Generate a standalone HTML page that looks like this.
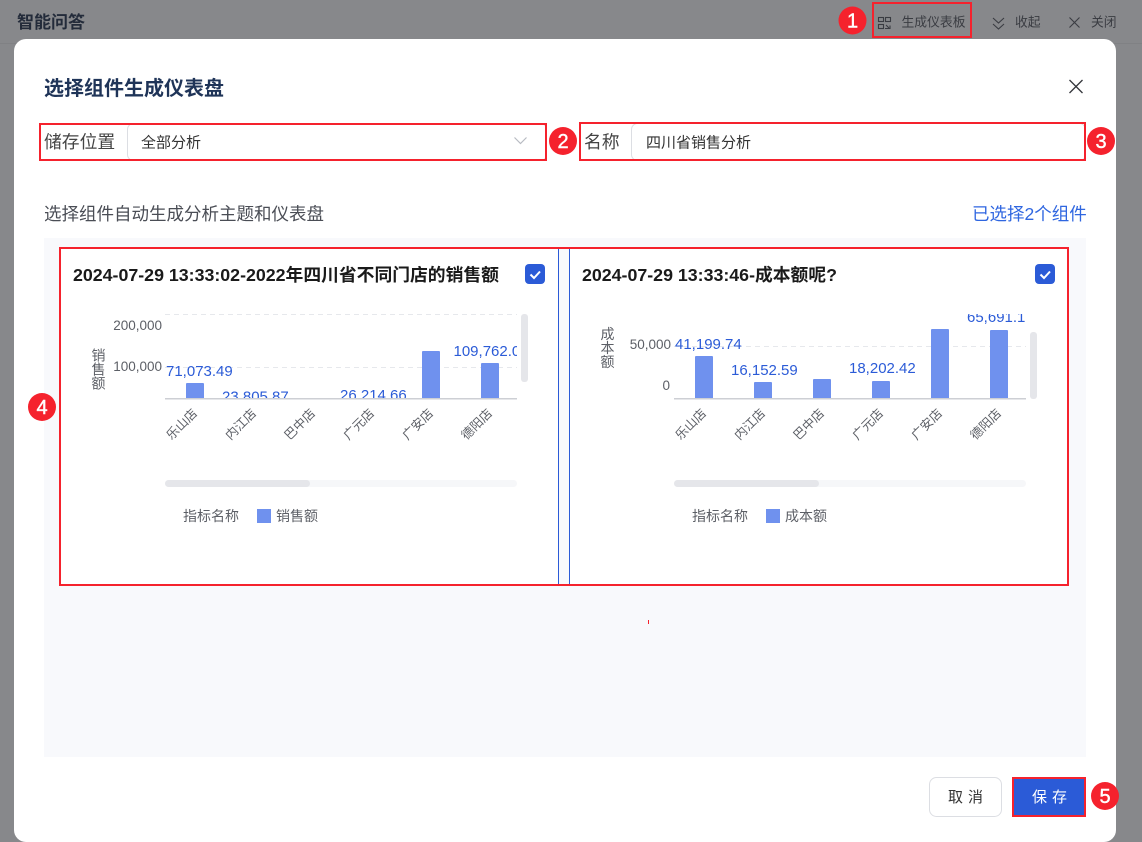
<!DOCTYPE html>
<html lang="zh"><head><meta charset="utf-8"><title>选择组件生成仪表盘</title>
<style>
html,body{margin:0;padding:0;width:1142px;height:842px;overflow:hidden;background:#87888b}
svg{display:block}
text{font-family:"Liberation Sans","Noto Sans CJK SC",sans-serif}
.ax{font-size:14px;fill:#5c5f66}
.num{font-size:13.5px;fill:#5c5f66;text-anchor:end}
.xl{font-size:12.5px;fill:#5c5f66}
.v{font-size:15px;fill:#2b5bd7}
.b{fill:#6f91ee}
.g{stroke:#e6e8ec;stroke-width:1;stroke-dasharray:5 4;fill:none}
.r{fill:none;stroke:#f5222d;stroke-width:2}
.n{font-size:20px;fill:#fff;text-anchor:middle;stroke:#fff;stroke-width:.4}
.t{font-size:17.8px;font-weight:700;fill:#1a1a1a}
</style></head><body>
<svg width="1142" height="842" viewBox="0 0 1142 842" xmlns="http://www.w3.org/2000/svg">
<defs>
<clipPath id="c1"><rect x="165" y="300" width="352" height="99"/></clipPath>
<clipPath id="c2"><rect x="674" y="314" width="352" height="85"/></clipPath>
</defs>
<rect width="1142" height="842" fill="#87888b"/>
<rect y="43" width="1142" height="1" fill="#808184"/>
<text x="17" y="28" font-size="17" font-weight="700" fill="#232b3a">智能问答</text>
<g fill="none" stroke="#3a3c42" stroke-width="1.1">
<rect x="878.500" y="17.500" width="5" height="4"/><rect x="885.500" y="17.500" width="5" height="4"/><rect x="878.500" y="24.500" width="5" height="4"/>
<path d="M885 28.500h5v-3M886 25l3 3"/>
<path d="M993 18l5.500 5 5.500-5M993 24l5.500 5 5.500-5"/>
<path d="M1069.500 17.500l10 10M1079.500 17.500l-10 10"/>
</g>
<g font-size="12.800" fill="#3a3c42"><text x="901.500" y="26.500">生成仪表板</text><text x="1015" y="26.500">收起</text><text x="1091" y="26.500">关闭</text></g>

<rect x="14" y="39" width="1102" height="803" rx="12" fill="#fff"/>
<text x="44" y="95" font-size="20" font-weight="700" fill="#1f3458">选择组件生成仪表盘</text>
<path d="M1069.500 80l13 13M1082.500 80l-13 13" stroke="#34363c" stroke-width="1.300" fill="none"/>

<text x="44" y="148" font-size="17.800" fill="#444">储存位置</text>
<rect x="127.500" y="123.500" width="419" height="37" rx="6" fill="#fff" stroke="#dcdee3"/>
<text x="141" y="147.500" font-size="15" fill="#333">全部分析</text>
<path d="M514.500 137.500l6 6 6-6" fill="none" stroke="#b8bbc2" stroke-width="1.200"/>
<text x="584" y="148" font-size="17.800" fill="#444">名称</text>
<rect x="631.500" y="123.500" width="454" height="37" rx="6" fill="#fff" stroke="#dcdee3"/>
<text x="646" y="147.500" font-size="15" fill="#333">四川省销售分析</text>

<text x="44" y="220" font-size="17.500" fill="#4a4d55">选择组件自动生成分析主题和仪表盘</text>
<text x="972" y="220" font-size="17.500" fill="#2f66e0">已选择2个组件</text>

<rect x="44" y="238" width="1042" height="519" fill="#f8f9fc"/>
<rect x="60" y="248" width="498" height="337" fill="#fff"/>
<rect x="570" y="248" width="498" height="337" fill="#fff"/>
<rect x="558" y="248" width="1" height="337" fill="#2b5bd7"/>
<rect x="569" y="248" width="1" height="337" fill="#2b5bd7"/>

<!-- card 1 -->
<text class="t" x="73" y="281">2024-07-29 13:33:02-2022年四川省不同门店的销售额</text>
<rect x="525" y="264" width="20" height="20" rx="4" fill="#2b5bd7"/>
<path d="M530.500 274.500l3.500 3.500 6-6.500" fill="none" stroke="#fff" stroke-width="2"/>
<path class="g" d="M165 314.500h352M165 367.500h352"/>
<text class="num" x="162" y="330">200,000</text>
<text class="num" x="162" y="371">100,000</text>
<g class="ax"><text x="91.500" y="360.500">销</text><text x="91.500" y="374.500">售</text><text x="91.500" y="388.500">额</text></g>
<g clip-path="url(#c1)">
<rect class="b" x="186" y="383" width="18" height="17" rx="1"/>
<rect class="b" x="422" y="351" width="18" height="49" rx="1"/>
<rect class="b" x="481" y="363" width="18" height="37" rx="1"/>
<text class="v" x="166" y="376">71,073.49</text>
<text class="v" x="222" y="401.500">23,805.87</text>
<text class="v" x="340" y="400">26,214.66</text>
<text class="v" x="453.500" y="356">109,762.08</text>
</g>
<rect x="165" y="398" width="352" height="1.500" fill="#cdcfd4"/>
<rect x="521" y="314" width="7" height="68" rx="3" fill="#e5e6ea"/>
<g class="xl">
<text transform="translate(171.500 440.500) rotate(-45)">乐山店</text>
<text transform="translate(230.500 440.500) rotate(-45)">内江店</text>
<text transform="translate(289.500 440.500) rotate(-45)">巴中店</text>
<text transform="translate(348.500 440.500) rotate(-45)">广元店</text>
<text transform="translate(407.500 440.500) rotate(-45)">广安店</text>
<text transform="translate(466.500 440.500) rotate(-45)">德阳店</text>
</g>
<rect x="165" y="480" width="352" height="7" rx="3.500" fill="#f6f7f9"/>
<rect x="165" y="480" width="145" height="7" rx="3.500" fill="#e5e6ea"/>
<text class="ax" x="183" y="521" font-size="14.200">指标名称</text>
<rect x="257" y="509" width="14" height="14" fill="#6f91ee"/>
<text class="ax" x="276" y="521">销售额</text>

<!-- card 2 -->
<text class="t" x="582" y="281">2024-07-29 13:33:46-成本额呢?</text>
<rect x="1035" y="264" width="20" height="20" rx="4" fill="#2b5bd7"/>
<path d="M1040.500 274.500l3.500 3.500 6-6.500" fill="none" stroke="#fff" stroke-width="2"/>
<path class="g" d="M674 346.500h352"/>
<text class="num" x="671" y="349">50,000</text>
<text class="num" x="670" y="390">0</text>
<g class="ax"><text x="600.500" y="339">成</text><text x="600.500" y="353">本</text><text x="600.500" y="367">额</text></g>
<g clip-path="url(#c2)">
<rect class="b" x="695" y="356" width="18" height="44" rx="1"/>
<rect class="b" x="754" y="382" width="18" height="18" rx="1"/>
<rect class="b" x="813" y="379" width="18" height="21" rx="1"/>
<rect class="b" x="872" y="381" width="18" height="19" rx="1"/>
<rect class="b" x="931" y="329" width="18" height="71" rx="1"/>
<rect class="b" x="990" y="330" width="18" height="70" rx="1"/>
<text class="v" x="675" y="349">41,199.74</text>
<text class="v" x="731" y="375">16,152.59</text>
<text class="v" x="849" y="373">18,202.42</text>
<text class="v" x="967" y="322">65,691.15</text>
</g>
<rect x="674" y="398" width="352" height="1.500" fill="#cdcfd4"/>
<rect x="1030" y="332" width="7" height="67" rx="3" fill="#e5e6ea"/>
<g class="xl">
<text transform="translate(680.500 440.500) rotate(-45)">乐山店</text>
<text transform="translate(739.500 440.500) rotate(-45)">内江店</text>
<text transform="translate(798.500 440.500) rotate(-45)">巴中店</text>
<text transform="translate(857.500 440.500) rotate(-45)">广元店</text>
<text transform="translate(916.500 440.500) rotate(-45)">广安店</text>
<text transform="translate(975.500 440.500) rotate(-45)">德阳店</text>
</g>
<rect x="674" y="480" width="352" height="7" rx="3.500" fill="#f6f7f9"/>
<rect x="674" y="480" width="145" height="7" rx="3.500" fill="#e5e6ea"/>
<text class="ax" x="692" y="521" font-size="14.200">指标名称</text>
<rect x="766" y="509" width="14" height="14" fill="#6f91ee"/>
<text class="ax" x="785" y="521">成本额</text>

<rect x="648" y="620" width="1" height="4" fill="#f5222d"/>

<!-- buttons -->
<rect x="929.500" y="777.500" width="72" height="39" rx="7" fill="#fff" stroke="#dcdee3"/>
<text x="948" y="802" font-size="15" fill="#333" letter-spacing="5">取消</text>
<rect x="1013" y="778" width="72" height="38" fill="#2b5bd7" stroke="#f5222d" stroke-width="2"/>
<text x="1032" y="802" font-size="15" fill="#fff" letter-spacing="5">保存</text>

<!-- annotations -->
<rect class="r" x="873" y="3" width="98" height="34"/>
<rect class="r" x="40" y="124" width="506" height="36"/>
<rect class="r" x="580" y="123" width="505" height="37"/>
<rect class="r" x="60" y="248" width="1008" height="337"/>
<g fill="#f5222d"><circle cx="852.500" cy="20.500" r="14"/><circle cx="563" cy="141" r="14"/><circle cx="1101" cy="141" r="14"/><circle cx="42" cy="407" r="14"/><circle cx="1105" cy="796" r="14"/></g>
<text class="n" x="852.500" y="27.500">1</text>
<text class="n" x="563" y="148">2</text>
<text class="n" x="1101" y="148">3</text>
<text class="n" x="42" y="414">4</text>
<text class="n" x="1105" y="803">5</text>
</svg>
</body></html>
